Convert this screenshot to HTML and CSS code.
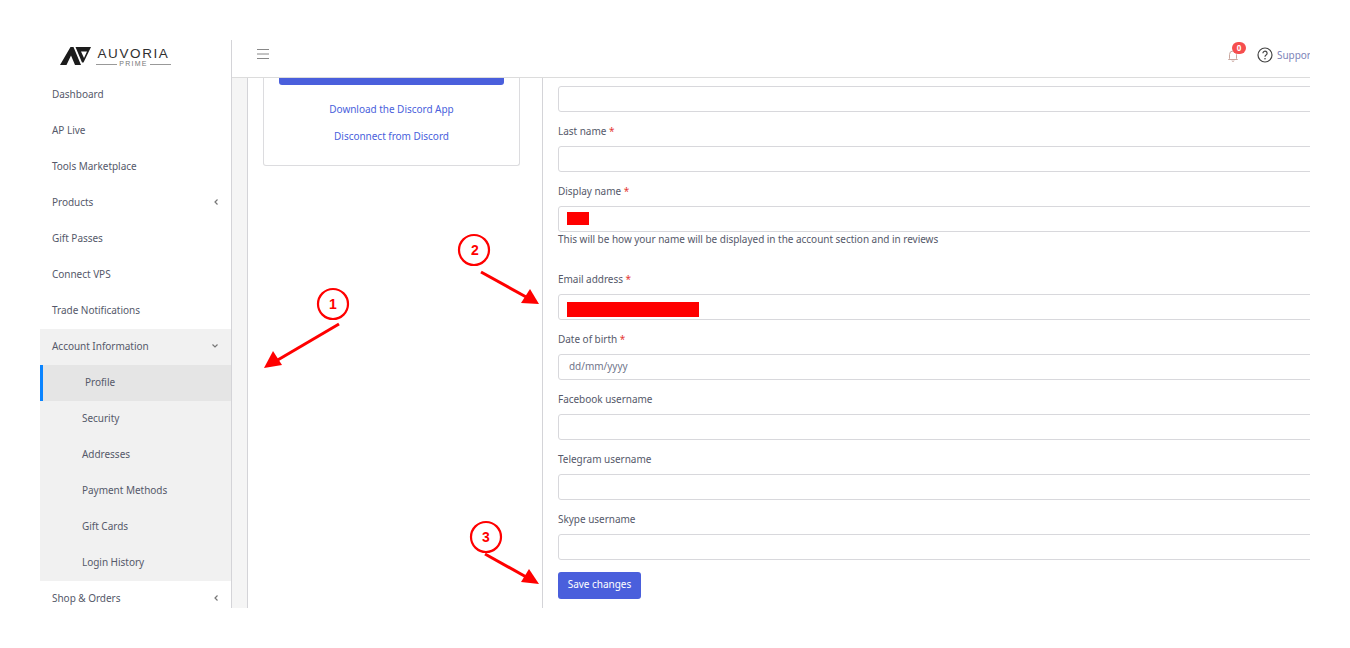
FILE: index.html
```html
<!DOCTYPE html>
<html lang="en">
<head>
<meta charset="utf-8">
<title>Account Information</title>
<link rel="stylesheet" href="styles.css">
</head>
<body>
<div class="frame">
  <aside class="sidebar">
    <div class="logo">
      <svg class="logo-mark" width="31" height="18" viewBox="0 0 31 18">
        <polygon fill="#1c1c1c" points="0,18 10.500,0 13.500,0 21,18 15,18 11,8.500 6.500,18"/>
        <path fill="#1c1c1c" fill-rule="evenodd" d="M15.500 0H31L23.500 15.500H22L15.500 0ZM21 4.500 24 11 27 4.500Z"/>
      </svg>
      <div class="logo-text">
        <span class="logo-name">AUVORIA</span>
        <span class="logo-sub">PRIME</span>
      </div>
    </div>
    <nav class="nav">
      <a class="nav-item">Dashboard</a>
      <a class="nav-item">AP Live</a>
      <a class="nav-item">Tools Marketplace</a>
      <a class="nav-item">Products<svg class="chev" width="6" height="8" viewBox="0 0 6 8"><path d="M4.500 1.500 2 4l2.500 2.500" fill="none" stroke="#777" stroke-width="1.200"/></svg></a>
      <a class="nav-item">Gift Passes</a>
      <a class="nav-item">Connect VPS</a>
      <a class="nav-item">Trade Notifications</a>
      <div class="nav-group">
        <a class="nav-item">Account Information<svg class="chev" width="8" height="6" viewBox="0 0 8 6"><path d="M1.500 1.500 4 4l2.500-2.500" fill="none" stroke="#777" stroke-width="1.200"/></svg></a>
        <a class="nav-item sub active">Profile</a>
        <a class="nav-item sub">Security</a>
        <a class="nav-item sub">Addresses</a>
        <a class="nav-item sub">Payment Methods</a>
        <a class="nav-item sub">Gift Cards</a>
        <a class="nav-item sub">Login History</a>
      </div>
      <a class="nav-item">Shop &amp; Orders<svg class="chev" width="6" height="8" viewBox="0 0 6 8"><path d="M4.500 1.500 2 4l2.500 2.500" fill="none" stroke="#777" stroke-width="1.200"/></svg></a>
    </nav>
  </aside>
  <div class="main">
    <header class="topbar">
      <svg class="burger" width="12" height="10" viewBox="0 0 12 10"><path d="M0 .5h12M0 5h12M0 9.500h12" stroke="#888" stroke-width="1" fill="none"/></svg>
      <div class="top-right">
        <span class="bell">
          <svg width="12" height="13" viewBox="0 0 12 13"><path d="M2.500 9.500V5.500a3.500 3.500 0 0 1 7 0v4l1 1h-9zM5 11.500a1 1 0 0 0 2 0" fill="none" stroke="#c9a79f" stroke-width="1"/></svg>
          <span class="badge">0</span>
        </span>
        <svg class="help" width="16" height="16" viewBox="0 0 16 16"><circle cx="8" cy="8" r="7" fill="none" stroke="#444" stroke-width="1.200"/><path d="M5.900 6.200a2.100 2.100 0 1 1 3.200 1.800C8.300 8.500 8 8.900 8 9.800" fill="none" stroke="#444" stroke-width="1.200"/><circle cx="8" cy="11.800" r=".8" fill="#444"/></svg>
        <a class="support">Support</a>
      </div>
    </header>
    <div class="content">
      <div class="gutter"></div>
      <section class="left-col">
        <div class="card">
          <div class="card-btn"></div>
          <a class="card-link">Download the Discord App</a>
          <a class="card-link">Disconnect from Discord</a>
        </div>
      </section>
      <form class="form">
        <input class="input first" type="text">
        <label class="label">Last name <i>*</i></label>
        <input class="input" type="text">
        <label class="label">Display name <i>*</i></label>
        <div class="input redacted"><span class="red red-name"></span></div>
        <p class="help-text">This will be how your name will be displayed in the account section and in reviews</p>
        <label class="label">Email address <i>*</i></label>
        <div class="input redacted"><span class="red red-email"></span></div>
        <label class="label">Date of birth <i>*</i></label>
        <div class="input date">dd/mm/yyyy</div>
        <label class="label">Facebook username</label>
        <input class="input" type="text">
        <label class="label">Telegram username</label>
        <input class="input" type="text">
        <label class="label">Skype username</label>
        <input class="input" type="text">
        <button class="save" type="button">Save changes</button>
      </form>
    </div>
  </div>
</div>
<svg class="notes" width="1350" height="648" viewBox="0 0 1350 648">
  <g fill="none" stroke="#f00" stroke-width="2.200">
    <circle cx="333" cy="304" r="15"/>
    <circle cx="474" cy="250" r="15"/>
    <circle cx="486" cy="537" r="15"/>
  </g>
  <g stroke="#f00" stroke-width="3">
    <path d="M339 324 276 361"/>
    <path d="M481 272 528 298"/>
    <path d="M485 554 528 578"/>
  </g>
  <g fill="#f00">
    <polygon points="264,368 273,351 282,365"/>
    <polygon points="539,304 521,303 530,289"/>
    <polygon points="539,584 521,582 529,569"/>
  </g>
  <g class="note-num" fill="#f00">
    <text x="333" y="309">1</text>
    <text x="475" y="255">2</text>
    <text x="486" y="542">3</text>
  </g>
</svg>
</body>
</html>
```
FILE: styles.css
```css
* { box-sizing: border-box; }
html, body { margin: 0; height: 100%; background: #fff; overflow: hidden; }
body { padding: 40px; font-family: "Noto Sans", sans-serif; font-size: 10px; letter-spacing: -.03px; color: #55596a; }
.frame { width: 1270px; height: 568px; display: flex; overflow: hidden; background: #fff; }

.sidebar { width: 192px; flex: none; border-right: 1px solid #d4d4d8; }
.logo { height: 36px; display: flex; gap: 5px; padding: 7px 0 0 20px; }
.logo-text { width: 75px; display: flex; flex-direction: column; align-items: center; }
.logo-name { font-family: "Liberation Sans", sans-serif; font-size: 13.500px; line-height: 13px; letter-spacing: 1.600px; color: #2f2f2f; white-space: nowrap; }
.logo-sub { width: 100%; display: flex; align-items: center; gap: 2px; font-family: "Liberation Sans", sans-serif; font-size: 7px; line-height: 8px; letter-spacing: 1.300px; color: #777; justify-content: center; }
.logo-sub::before, .logo-sub::after { content: ""; flex: 1; height: 1px; background: #999; }
.nav-item { height: 36px; display: flex; align-items: center; justify-content: space-between; padding: 0 12px; color: #55596a; }
.nav-group { background: #f1f1f1; margin-top: 1px; margin-bottom: -1px; }
.nav-group .nav-item { padding-bottom: 2px; }
.nav-group .sub { padding-left: 42px; }
.nav-group .active { background: #e5e5e5; border-left: 3px solid #0a84ff; padding-left: 42px; }

.main { flex: 1; min-width: 0; display: flex; flex-direction: column; }
.topbar { height: 38px; flex: none; display: flex; align-items: center; justify-content: space-between; padding: 0 0 9px 25px; border-bottom: 1px solid #dcdcdc; }
.top-right { display: flex; align-items: center; padding-top: 2px; }
.bell { position: relative; display: flex; margin-right: 18px; }
.badge { position: absolute; left: 5px; top: -7px; width: 14px; height: 12px; border-radius: 6px; background: #f64e4e; color: #fff; font-size: 8px; font-weight: 700; line-height: 12px; text-align: center; }
.help { margin-right: 4px; }
.support { width: 33px; overflow: hidden; color: #7d84b8; white-space: nowrap; }

.content { flex: 1; min-height: 0; display: flex; overflow: hidden; }
.gutter { width: 16px; flex: none; background: #f5f5f5; border-right: 1px solid #d4d4d8; }
.left-col { width: 295px; flex: none; padding: 0 22px 0 15px; border-right: 1px solid #d4d4d8; }
.card { height: 88px; border: 1px solid #dcdcdf; border-top: 0; border-radius: 0 0 3px 3px; padding: 0 15px; display: flex; flex-direction: column; align-items: center; }
.card-btn { width: 100%; height: 7px; background: #4a5fdc; border-radius: 0 0 3px 3px; margin-bottom: 17px; }
.card-link { height: 27px; line-height: 15px; color: #4a5fdc; }

.form { flex: 1; min-width: 0; padding: 8px 0 0 15px; display: flex; flex-direction: column; }
.input { display: block; width: 800px; height: 26px; flex: none; border: 1px solid #d8d8dc; border-radius: 3px; background: #fff; padding: 0 10px; outline: 0; }
.label { height: 34px; padding-top: 12px; line-height: 15px; flex: none; }
.label i { color: #e53935; font-style: normal; }
.redacted { position: relative; }
.red { position: absolute; background: #f00; }
.red-name { left: 8px; top: 5px; width: 22px; height: 13px; }
.red-email { left: 8px; top: 7px; width: 132px; height: 15px; }
.help-text { margin: 0; height: 28px; line-height: 15px; flex: none; }
.date { line-height: 22px; color: #70758a; }
.save { width: 83px; height: 27px; flex: none; margin-top: 12px; border: 0; border-radius: 3px; background: #4a5fdc; color: #fff; font: inherit; letter-spacing: inherit; padding: 0 0 3px; }

.notes { position: absolute; left: 0; top: 0; pointer-events: none; }
.note-num { font: 700 14px "Liberation Sans", sans-serif; text-anchor: middle; }
```
